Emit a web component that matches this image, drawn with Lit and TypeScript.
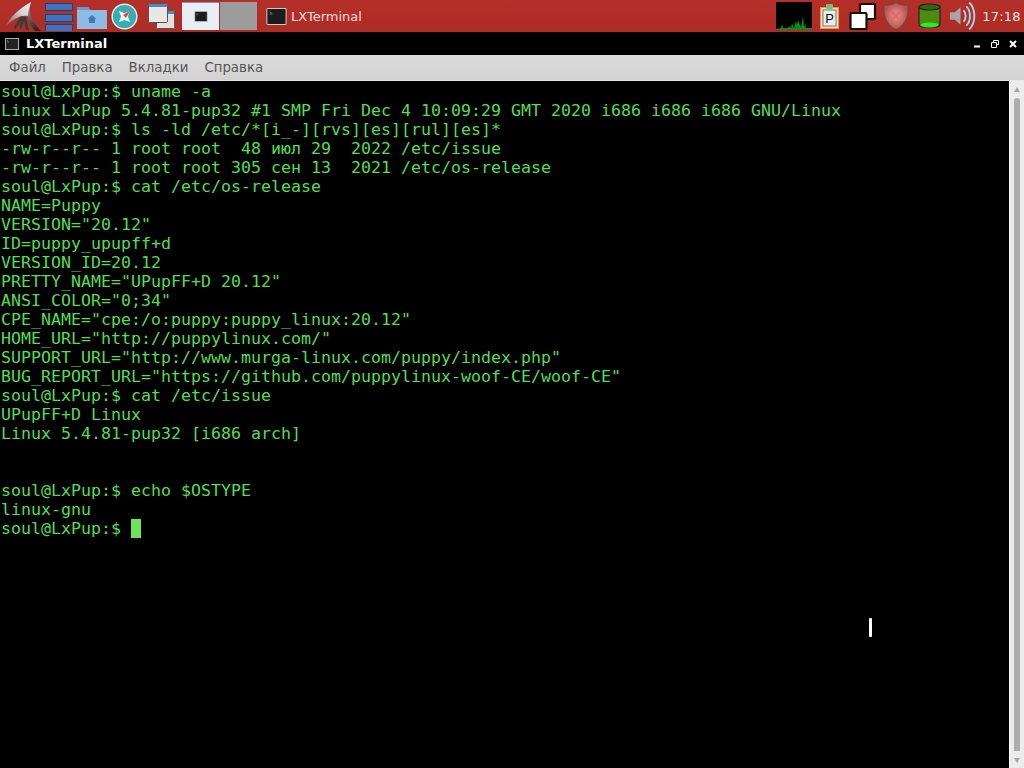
import { LitElement, html, css, svg } from "lit";
import { customElement } from "lit/decorators.js";

const LINES = [
  "soul@LxPup:$ uname -a",
  "Linux LxPup 5.4.81-pup32 #1 SMP Fri Dec 4 10:09:29 GMT 2020 i686 i686 i686 GNU/Linux",
  "soul@LxPup:$ ls -ld /etc/*[i_-][rvs][es][rul][es]*",
  "-rw-r--r-- 1 root root  48 июл 29  2022 /etc/issue",
  "-rw-r--r-- 1 root root 305 сен 13  2021 /etc/os-release",
  "soul@LxPup:$ cat /etc/os-release",
  "NAME=Puppy",
  'VERSION="20.12"',
  "ID=puppy_upupff+d",
  "VERSION_ID=20.12",
  'PRETTY_NAME="UPupFF+D 20.12"',
  'ANSI_COLOR="0;34"',
  'CPE_NAME="cpe:/o:puppy:puppy_linux:20.12"',
  'HOME_URL="http://puppylinux.com/"',
  'SUPPORT_URL="http://www.murga-linux.com/puppy/index.php"',
  'BUG_REPORT_URL="https://github.com/puppylinux-woof-CE/woof-CE"',
  "soul@LxPup:$ cat /etc/issue",
  "UPupFF+D Linux",
  "Linux 5.4.81-pup32 [i686 arch]",
  "",
  "",
  "soul@LxPup:$ echo $OSTYPE",
  "linux-gnu",
];

const termIcon = (w: number, h: number) => svg`
  <svg width=${w} height=${h} viewBox="0 0 24 20">
    <rect x="0.7" y="0.7" width="22.6" height="18.6" rx="1" fill="#1c1c1c" stroke="#c9c9c9" stroke-width="1.2"/>
    <path d="M4 4l2 2M4 7h3" stroke="#9a9a9a" stroke-width="1" fill="none"/>
  </svg>`;

@customElement("app-root")
export class AppRoot extends LitElement {
  static styles = css`
    :host { display: flex; flex-direction: column; width: 1024px; height: 768px; overflow: hidden; position: relative; background: #000; font-family: "DejaVu Sans", sans-serif; }
    .panel { height: 32px; flex: none; display: flex; align-items: center; background: linear-gradient(#b52f29, #ad2c26); }
    .panel svg { display: block; flex: none; }
    .logo { margin-left: 4px; }
    .stack { margin-left: 3px; }
    .folder { margin-left: 4px; margin-top: 2px; }
    .compass { margin-left: 4px; }
    .windows { margin-left: 10px; }
    .pager { display: flex; margin-left: 7px; height: 28px; gap: 1px; }
    .desk { width: 37px; height: 28px; display: flex; align-items: center; justify-content: center; }
    .desk.on { background: #e8eef4; border-top: 1px solid #6f9fc9; box-sizing: border-box; }
    .desk.off { background: #9c9c9c; }
    .task { display: flex; align-items: center; gap: 3px; margin-left: 8px; color: #f3dcdc; font-size: 13px; }
    .spacer { flex: 1; }
    .graph { width: 36px; height: 28px; }
    .clip { margin-left: 8px; }
    .wins { margin-left: 10px; }
    .shield { margin-left: 6px; }
    .drum { margin-left: 9px; }
    .vol { margin-left: 8px; }
    .clock { width: 45px; margin-left: 3px; color: #f7e6e4; font-size: 13px; text-align: center; letter-spacing: 0.2px; }
    .title { height: 23px; flex: none; display: flex; align-items: center; background: #000; color: #fff; }
    .title svg { display: block; flex: none; }
    .tname { margin-left: 7px; font-weight: 700; font-size: 13px; }
    .ticon { margin-left: 5px; }
    .ctl { display: flex; margin-left: auto; align-items: center; gap: 10px; margin-right: 7px; }
    .menu { height: 26px; flex: none; box-sizing: border-box; display: flex; align-items: center; padding-left: 9px; gap: 16px; background: linear-gradient(#dcdcdc, #d2d2d2); border-bottom: 1px solid #e6e6e6; color: #555; font-size: 13.33px; }
    .body { flex: 1; display: flex; min-height: 0; }
    .term { flex: 1; background: #000; color: #55dd55; font-family: "DejaVu Sans Mono", monospace; font-size: 16.61px; line-height: 19px; padding: 1px 0 0 1px; white-space: pre; overflow: hidden; }
    .line { height: 19px; }
    .cur { display: inline-block; width: 10px; height: 19px; background: #6fe35c; vertical-align: top; }
    .sb { width: 15px; flex: none; background: #ececec; border-left: 1px solid #fafafa; box-sizing: border-box; display: flex; flex-direction: column; align-items: center; }
    .thumb { flex: 1; width: 6px; background: #adadad; border-radius: 3px 3px 0 0; margin: 6px 0 7px 0; }
    .arrow { flex: none; margin: 6px 0 0 0; width: 0; height: 0; border: 3px solid transparent; border-bottom: 5px solid #a8a8a8; border-top: 0; }
    .arrow.dn { margin: 0 0 5px 0; border-bottom: 0; border-top: 5px solid #a8a8a8; }
    .ibeam { position: absolute; left: 869px; top: 618px; width: 3px; height: 19px; background: #fff; border-radius: 1px; }
  `;

  render() {
    return html`
      <div class="panel">
        <svg class="logo" width="38" height="32" viewBox="0 0 38 32">
          <defs>
            <linearGradient id="lx" x1="0" y1="1" x2="1" y2="0"><stop offset="0" stop-color="#5a5453"/><stop offset="0.6" stop-color="#d6d4d4"/><stop offset="1" stop-color="#efeeee"/></linearGradient>
            <linearGradient id="lr" x1="0" y1="0" x2="0.4" y2="1"><stop offset="0" stop-color="#a8a4a4"/><stop offset="1" stop-color="#2e2826"/></linearGradient>
          </defs>
          <path d="M10 27L17 16L22 17L25 30L22 30L20 21L17 30L15 24L11 30Z" fill="#413a39"/>
          <path d="M27 2C24 11 27 21 37 31L31 31C23 22 21 11 27 2Z" fill="url(#lr)"/>
          <path d="M1 27C6 17 16 8 27 2C25 8 24 12 24 16C20 15 15 16 11 19C7 21 4 24 1 27Z" fill="url(#lx)"/>
        </svg>
        <svg class="stack" width="28" height="30" viewBox="0 0 28 30">
          ${[2, 13, 23].map(
            (y) => svg`<rect x="0.5" y=${y + 0.5} width="27" height="7" fill="#3d73c0" stroke="#26406e"/>`
          )}
        </svg>
        <svg class="folder" width="30" height="24" viewBox="0 0 30 24">
          <path d="M0 2h11l2 3h17v19H0Z" fill="#8cbbe4"/>
          <path d="M0 2h11l2 3H0Z" fill="#6c9ac4"/>
          <path d="M15 10l-4.500 4h1.500v4h6v-4h1.500Z" fill="#4579ad"/>
        </svg>
        <svg class="compass" width="27" height="27" viewBox="0 0 28 28">
          <circle cx="14" cy="14" r="12.800" fill="#33aeb5" stroke="#e4ecec" stroke-width="1.500"/>
          <path d="M14 10.500L20 8L17.500 14L20 20L14 17.500L8 20L10.500 14L8 8Z" fill="#f2f6f6"/>
          <path d="M20.500 7.500L15.500 15.500L12.500 12.500Z" fill="#e04a42"/>
        </svg>
        <svg class="windows" width="27" height="26" viewBox="0 0 27 26">
          <rect x="8.500" y="7.500" width="18" height="18" rx="1" fill="#e2e1dc" stroke="#555"/>
          <rect x="9" y="8" width="17" height="3" fill="#4f86c6"/>
          <rect x="0.500" y="0.500" width="19" height="19" rx="1" fill="#e8e7e2" stroke="#555"/>
          <rect x="1" y="1" width="18" height="3" fill="#4f86c6"/>
        </svg>
        <div class="pager">
          <div class="desk on">${termIcon(14, 11)}</div>
          <div class="desk off"></div>
        </div>
        <div class="task">${termIcon(23, 17)}<span>LXTerminal</span></div>
        <div class="spacer"></div>
        <svg class="graph" viewBox="0 0 36 28">
          <rect width="36" height="28" fill="#000"/>
          <path d="M0 28V27L5 26L6 22L7 26H12L13 24L15 26L16 21L17 24L18 26L20 19L21 23L22 18L24 23L25 25L27 14L28 25L29 21L30 26H36V28Z" fill="#0f8a1a"/>
        </svg>
        <svg class="clip" width="19" height="26" viewBox="0 0 19 26">
          <rect x="0.500" y="4.500" width="18" height="21" fill="#f6dfa8" stroke="#e59c3c"/>
          <rect x="3" y="7" width="13" height="16" fill="#e6ecf2" stroke="#56606a" stroke-width="0.800"/>
          <rect x="6" y="1" width="7" height="5" rx="1" fill="#6fc47a"/>
          <text x="9.500" y="20" font-family="Liberation Sans, sans-serif" font-size="13" text-anchor="middle" fill="#111">P</text>
        </svg>
        <svg class="wins" width="28" height="28" viewBox="0 0 28 28">
          <rect x="11" y="2" width="15" height="15" fill="#fff" stroke="#111" stroke-width="2.200" rx="1"/>
          <rect x="1.500" y="11" width="16" height="16" fill="#fff" stroke="#111" stroke-width="2.200" rx="1"/>
        </svg>
        <svg class="shield" width="26" height="30" viewBox="0 0 26 30">
          <defs><radialGradient id="sh"><stop offset="0" stop-color="#e89a94"/><stop offset="1" stop-color="#c04a44"/></radialGradient></defs>
          <path d="M13 1C16 4 21 4 25 4C26 14 23 24 13 29C3 24 0 14 1 4C5 4 10 4 13 1Z" fill="url(#sh)" stroke="#6c4a48" stroke-width="1.400"/>
          <path d="M8 10L18 20M18 10L8 20" stroke="#d9706c" stroke-width="3"/>
        </svg>
        <svg class="drum" width="23" height="28" viewBox="0 0 23 28">
          <path d="M1 5V23C1 26 22 26 22 23V5Z" fill="#4d8a12" stroke="#222" stroke-width="1.200"/>
          <ellipse cx="11.500" cy="5" rx="10.500" ry="3" fill="#2e6a0c" stroke="#222" stroke-width="1.200"/>
          <ellipse cx="11.500" cy="23" rx="9" ry="2.600" fill="#22f022"/>
        </svg>
        <svg class="vol" width="27" height="30" viewBox="0 0 28 30">
          <path d="M1 11H6L12 6V24L6 19H1Z" fill="#a8a4a4"/>
          <path d="M15 9C18 12 18 18 15 21" fill="none" stroke="#a9cfe0" stroke-width="2"/>
          <path d="M18 5C23 10 23 20 18 25" fill="none" stroke="#a9cfe0" stroke-width="2"/>
          <path d="M21 1C28 8 28 22 21 29" fill="none" stroke="#a9cfe0" stroke-width="2"/>
        </svg>
        <div class="clock">17:18</div>
      </div>
      <div class="title">
        <svg class="ticon" width="14" height="12" viewBox="0 0 14 12">
          <rect x="0.500" y="0.500" width="13" height="11" fill="#222" stroke="#aaa"/>
          <path d="M2 2l1 1M2 4h2" stroke="#888" stroke-width="0.800"/>
        </svg>
        <span class="tname">LXTerminal</span>
        <div class="ctl">
          <svg width="8" height="8" viewBox="0 0 8 8"><rect x="1" y="5.500" width="6" height="2" fill="#fff"/></svg>
          <svg width="8" height="8" viewBox="0 0 8 8"><path d="M2.500 2.500V.5h5v4H5.500M.5 2.500h5v5h-5Z" fill="none" stroke="#fff"/></svg>
          <svg width="8" height="8" viewBox="0 0 8 8"><path d="M1 1L7 7M7 1L1 7" stroke="#fff" stroke-width="2"/></svg>
        </div>
      </div>
      <div class="menu"><span>Файл</span><span>Правка</span><span>Вкладки</span><span>Справка</span></div>
      <div class="body">
        <div class="term">${LINES.map((l) => html`<div class="line">${l}</div>`)}<div class="line">soul@LxPup:$ <span class="cur"></span></div></div>
        <div class="sb">
          <div class="arrow"></div>
          <div class="thumb"></div>
          <div class="arrow dn"></div>
        </div>
      </div>
      <div class="ibeam"></div>
    `;
  }
}
